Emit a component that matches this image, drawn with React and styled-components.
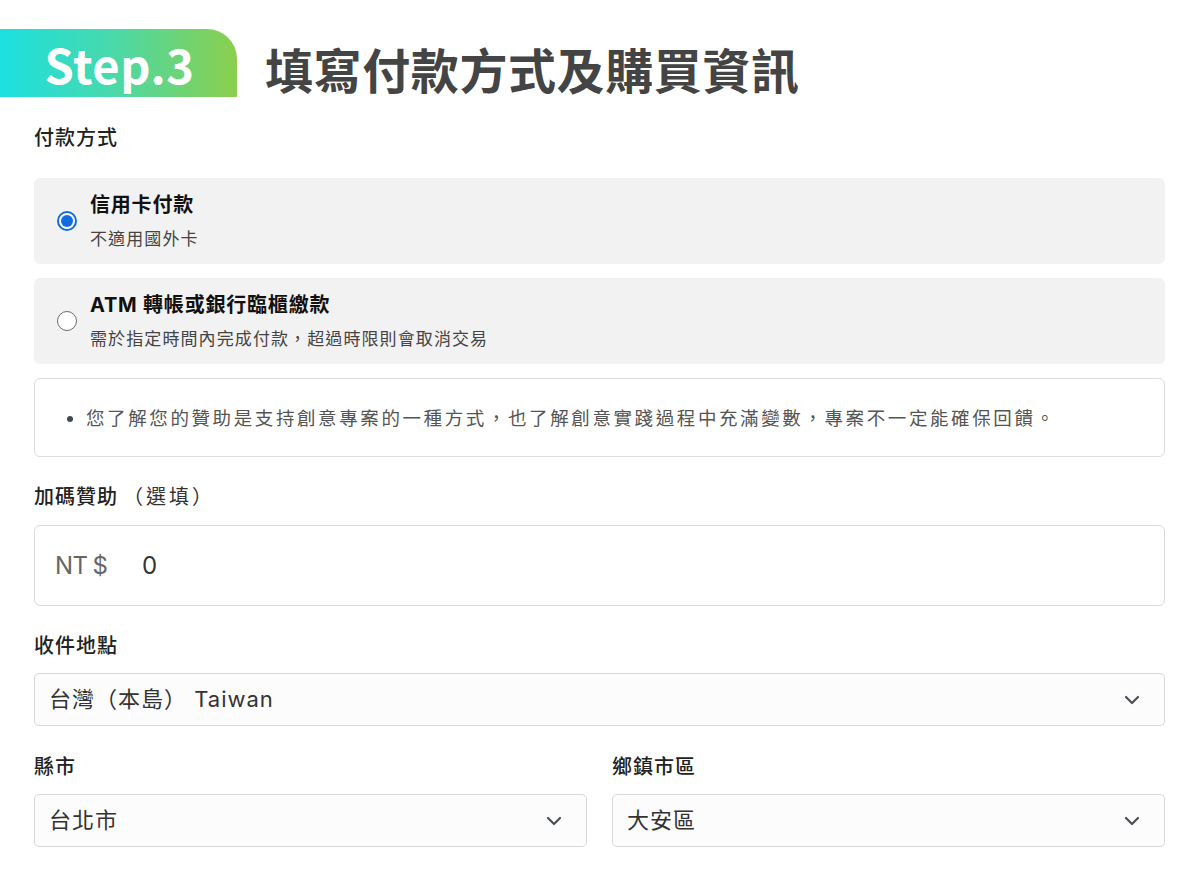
import React, { useState } from "react";
import styled, { createGlobalStyle } from "styled-components";
import { ChevronDown } from "lucide-react";

const GlobalStyle = createGlobalStyle`
  html, body {
    margin: 0;
    padding: 0;
    background: #ffffff;
  }
  body {
    font-family: Inter, "Noto Sans CJK TC", "Noto Sans", sans-serif;
    color: #222;
    -webkit-font-smoothing: antialiased;
  }
  * { box-sizing: border-box; }
`;

const Page = styled.div`
  width: 1200px;
  padding: 29px 35px 40px 34px;
`;

const StepHeader = styled.header`
  display: flex;
  align-items: center;
  margin-left: -34px;
  height: 68px;
  gap: 28px;
`;

const StepBadge = styled.div`
  width: 237px;
  height: 68px;
  flex: none;
  display: flex;
  align-items: center;
  justify-content: center;
  padding-left: 2px;
  border-top-right-radius: 30px;
  background: linear-gradient(90deg, #1be0e0 0%, #46d9ae 45%, #8bcf4b 100%);
  color: #fff;
  font-family: "Noto Sans CJK TC", "Noto Sans", sans-serif;
  font-weight: 700;
  font-size: 47px;
  line-height: 1;
  letter-spacing: 0.5px;
`;

const StepTitle = styled.h1`
  margin: 0;
  padding-top: 10px;
  font-family: "Noto Sans CJK TC", sans-serif;
  font-weight: 700;
  font-size: 48px;
  letter-spacing: 0.6px;
  color: #444;
  line-height: 1;
`;

const Section = styled.section`
  display: flex;
  flex-direction: column;
  margin-top: ${(p) => p.$top || 26}px;
`;

const FieldLabel = styled.div`
  font-family: "Noto Sans CJK TC", sans-serif;
  font-size: 20px;
  font-weight: 500;
  letter-spacing: 1px;
  line-height: 28px;
  color: #222;
  margin-bottom: ${(p) => p.$gap || 14}px;
`;

const Optional = styled.span`
  font-weight: 400;
  color: #333;
  letter-spacing: 3px;
  margin-left: 5px;
`;

const OptionList = styled.div`
  display: flex;
  flex-direction: column;
  gap: 14px;
`;

const OptionCard = styled.label`
  display: flex;
  align-items: center;
  gap: 13px;
  padding: 13px 23px;
  background: #f2f2f2;
  border-radius: 6px;
  cursor: pointer;
`;

const RadioDot = styled.span`
  width: 20px;
  height: 20px;
  flex: none;
  border-radius: 50%;
  background: #fff;
  border: ${(p) => (p.$checked ? "2px solid #0f6de0" : "1.5px solid #6b6b6b")};
  position: relative;
  &::after {
    content: "";
    display: ${(p) => (p.$checked ? "block" : "none")};
    position: absolute;
    inset: 2px;
    border-radius: 50%;
    background: #0f6de0;
  }
`;

const OptionText = styled.div`
  display: flex;
  flex-direction: column;
  gap: 6px;
`;

const OptionTitle = styled.div`
  font-family: Inter, "Noto Sans CJK TC", sans-serif;
  font-size: 20px;
  font-weight: 700;
  letter-spacing: 0.8px;
  line-height: 28px;
  color: #111;
`;

const OptionNote = styled.div`
  font-family: "Noto Sans CJK TC", sans-serif;
  font-size: 17px;
  letter-spacing: 1.1px;
  line-height: 26px;
  color: #444;
`;

const Notice = styled.ul`
  margin: 14px 0 0;
  padding: 23px 20px 24px 51px;
  border: 1px solid #dcdcdc;
  border-radius: 6px;
  background: #fff;
  list-style: disc;
  li {
    font-family: "Noto Sans CJK TC", sans-serif;
    font-size: 18.5px;
    letter-spacing: 2.6px;
    line-height: 30px;
    color: #555;
  }
  li::marker {
    color: #3f4a55;
    font-size: 16px;
  }
`;

const AmountBox = styled.div`
  display: flex;
  align-items: center;
  height: 81px;
  padding: 0 20px;
  border: 1px solid #dadada;
  border-radius: 6px;
  background: #fff;
`;

const Currency = styled.span`
  display: flex;
  gap: 5px;
  width: 87px;
  font-family: Inter, sans-serif;
  font-size: 24px;
  line-height: 30px;
  letter-spacing: -0.5px;
  color: #666;
`;

const AmountValue = styled.span`
  font-family: Inter, sans-serif;
  font-size: 24px;
  line-height: 30px;
  color: #333;
`;

const SelectBox = styled.div`
  display: flex;
  align-items: center;
  justify-content: space-between;
  height: 53px;
  padding: 0 20px 0 14px;
  border: 1px solid #d8d8d8;
  border-radius: 5px;
  background: #fcfcfc;
  color: #333;
  font-family: Inter, "Noto Sans CJK TC", sans-serif;
  font-size: 22px;
  letter-spacing: 1px;
  span {
    line-height: 24px;
    padding-bottom: 2px;
  }
  svg {
    color: #4a4f57;
    flex: none;
  }
`;

const TwoCols = styled.div`
  display: grid;
  grid-template-columns: 1fr 1fr;
  gap: 25px;
`;

function Select({ value }) {
  return (
    <SelectBox>
      <span>{value}</span>
      <ChevronDown size={24} strokeWidth={2.2} />
    </SelectBox>
  );
}

const paymentOptions = [
  { id: "card", title: "信用卡付款", note: "不適用國外卡" },
  {
    id: "atm",
    title: "ATM 轉帳或銀行臨櫃繳款",
    note: "需於指定時間內完成付款，超過時限則會取消交易",
  },
];

export default function App() {
  const [method, setMethod] = useState("card");

  return (
    <>
      <GlobalStyle />
      <Page>
        <StepHeader>
          <StepBadge>Step.3</StepBadge>
          <StepTitle>填寫付款方式及購買資訊</StepTitle>
        </StepHeader>

        <Section $top={26}>
          <FieldLabel $gap={27}>付款方式</FieldLabel>
          <OptionList>
            {paymentOptions.map((opt) => (
              <OptionCard key={opt.id} onClick={() => setMethod(opt.id)}>
                <RadioDot $checked={method === opt.id} />
                <OptionText>
                  <OptionTitle>{opt.title}</OptionTitle>
                  <OptionNote>{opt.note}</OptionNote>
                </OptionText>
              </OptionCard>
            ))}
          </OptionList>
          <Notice>
            <li>
              您了解您的贊助是支持創意專案的一種方式，也了解創意實踐過程中充滿變數，專案不一定能確保回饋。
            </li>
          </Notice>
        </Section>

        <Section $top={25}>
          <FieldLabel $gap={15}>
            加碼贊助<Optional>（選填）</Optional>
          </FieldLabel>
          <AmountBox>
            <Currency>
              <span>NT</span>
              <span>$</span>
            </Currency>
            <AmountValue>0</AmountValue>
          </AmountBox>
        </Section>

        <Section $top={25}>
          <FieldLabel>收件地點</FieldLabel>
          <Select value="台灣（本島） Taiwan" />
        </Section>

        <Section $top={26}>
          <TwoCols>
            <div>
              <FieldLabel>縣市</FieldLabel>
              <Select value="台北市" />
            </div>
            <div>
              <FieldLabel>鄉鎮市區</FieldLabel>
              <Select value="大安區" />
            </div>
          </TwoCols>
        </Section>
      </Page>
    </>
  );
}
